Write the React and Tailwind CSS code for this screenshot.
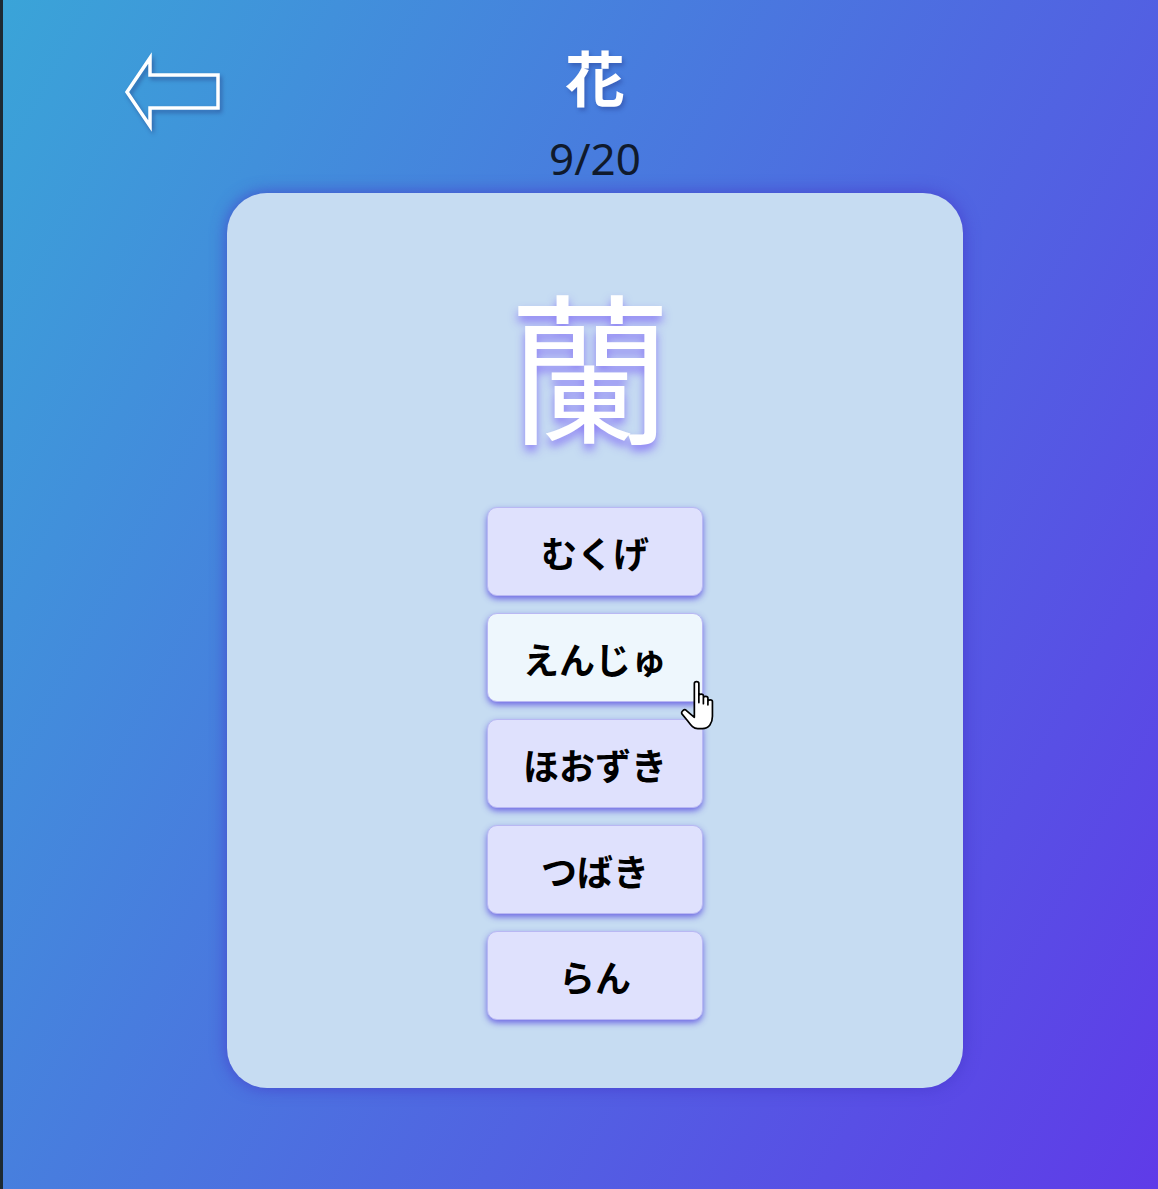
const choices = ["むくげ", "えんじゅ", "ほおずき", "つばき", "らん"];

function BackArrow() {
  return (
    <svg
      width="104"
      height="80"
      viewBox="0 0 104 80"
      className="[filter:drop-shadow(2px_3px_2px_rgba(30,40,110,0.45))]"
    >
      <path
        d="M5 40 L28 6 L28 23 L96 23 L96 56 L28 56 L28 74 Z"
        fill="none"
        stroke="white"
        strokeWidth="3.5"
        strokeLinejoin="miter"
      />
    </svg>
  );
}

function HandCursor() {
  return (
    <svg width="40" height="52" viewBox="0 0 34 46" className="absolute left-[677px] top-[680px]">
      <path
        d="M12 3 C12 1 16 1 16 3 L16 20 L16 14 C16 12 20 12 20 14 L20 21 L20 16 C20 14 24 14 24 16 L24 22 L24 19 C24 17 28 17 28 19 L28 32 C28 38 25 43 19 43 L15 43 C11 43 9 40 6 36 L1 30 C-0 28 3 25 5 27 L12 33 Z"
        fill="white"
        stroke="black"
        strokeWidth="1.5"
        strokeLinejoin="round"
      />
    </svg>
  );
}

export default function App() {
  return (
    <div className="relative min-h-[1189px] border-l-[3px] border-[#1d2a33] pl-[29px] bg-linear-[118deg] from-[#3aa4d8] to-[#5f3be8] font-['Noto_Sans','Noto_Sans_CJK_JP',sans-serif]">
      <header className="relative flex flex-col items-center pt-[46px]">
        <div className="absolute left-[90px] top-[52px]">
          <BackArrow />
        </div>
        <h1 className="text-[60px] leading-none font-bold text-white font-['Noto_Sans_CJK_JP',sans-serif] [text-shadow:2px_3px_4px_rgba(30,40,120,0.35)]">
          花
        </h1>
        <div className="mt-[30px] text-[44px] leading-none text-[#101a2c]">9/20</div>
      </header>

      <main className="mt-[13px] flex justify-center">
        <div className="w-[736px] h-[895px] rounded-[40px] bg-[#c6dcf2] shadow-[0_0_16px_rgba(70,55,200,0.75)] flex flex-col items-center pt-[88px]">
          <div className="pr-[10px] text-[162px] leading-none text-white font-['Noto_Sans_CJK_JP',sans-serif] [text-shadow:0_6px_10px_rgba(130,110,245,0.85)]">
            蘭
          </div>
          <div className="mt-[64px] flex flex-col gap-[17px]">
            {choices.map((c, i) => (
              <button
                key={c}
                className={
                  "w-[216px] h-[89px] rounded-[10px] border border-[#b9b8f3] text-[36px] font-bold text-black font-['Noto_Sans_CJK_JP',sans-serif] shadow-[0_3px_6px_rgba(95,85,225,0.85)] " +
                  (i === 1 ? "bg-[#eef7fd]" : "bg-[#dfe1fd]")
                }
              >
                {c}
              </button>
            ))}
          </div>
        </div>
      </main>

      <HandCursor />
    </div>
  );
}
